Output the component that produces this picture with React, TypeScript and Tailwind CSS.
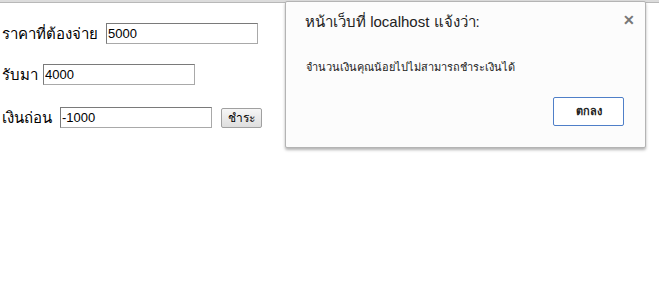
export default function App() {
  const rows = [
    { label: "ราคาที่ต้องจ่าย", value: "5000", top: "pt-[20px]", gap: "mr-[8px]" },
    { label: "รับมา", value: "4000", top: "pt-[20px]", gap: "mr-[5px]" },
    { label: "เงินถ่อน", value: "-1000", top: "pt-[22px]", gap: "mr-[8px]" },
  ];

  return (
    <div className="relative h-[299px] w-[659px] overflow-hidden bg-white font-['Liberation_Sans',sans-serif] text-black">
      {/* browser top edge */}
      <div className="h-[3px] w-full border-b border-[#b8b8b8] bg-[#dcdcdc]" />

      <div className="flex flex-col pl-[2px]">
        {rows.map((row, i) => (
          <div key={i} className={`flex items-center ${row.top}`}>
            <span className={`${row.gap} text-[15px] leading-[21px]`}>{row.label}</span>
            <input
              readOnly
              value={row.value}
              className="h-[21px] w-[152px] border border-[#a9a9a9] border-t-[#7a7a7a] border-l-[#7a7a7a] px-[1px] text-[13px] leading-[19px] outline-none"
            />
            {i === 2 && (
              <button className="ml-[9px] h-[20px] w-[41px] rounded-[2px] border border-[#a0a0a0] bg-gradient-to-b from-[#f6f6f6] to-[#dedede] text-[12px] leading-[18px]">
                ชำระ
              </button>
            )}
          </div>
        ))}
      </div>

      {/* alert dialog */}
      <div className="absolute left-[285px] top-[1px] h-[147px] w-[361px] rounded-[2px] border border-[#b4b4b4] bg-[#fcfcfc] shadow-[0_2px_3px_rgba(0,0,0,0.3)]">
        <div className="flex items-start justify-between pl-[19px] pr-[10px] pt-[10px]">
          <span className="text-[15px] leading-[20px] text-[#222]">หน้าเว็บที่ localhost แจ้งว่า:</span>
          <span className="mt-[1px] text-[14px] font-bold leading-[14px] text-[#777]">✕</span>
        </div>
        <div className="pl-[20px] pt-[28px] text-[11px] leading-[14px] text-[#222]">
          จำนวนเงินคุณน้อยไปไม่สามารถชำระเงินได้
        </div>
        <div className="flex justify-end pr-[21px] pt-[23px]">
          <button className="h-[29px] w-[71px] rounded-[2px] border border-[#4f7fc8] bg-white text-[11px] font-bold text-[#222]">
            ตกลง
          </button>
        </div>
      </div>
    </div>
  );
}
